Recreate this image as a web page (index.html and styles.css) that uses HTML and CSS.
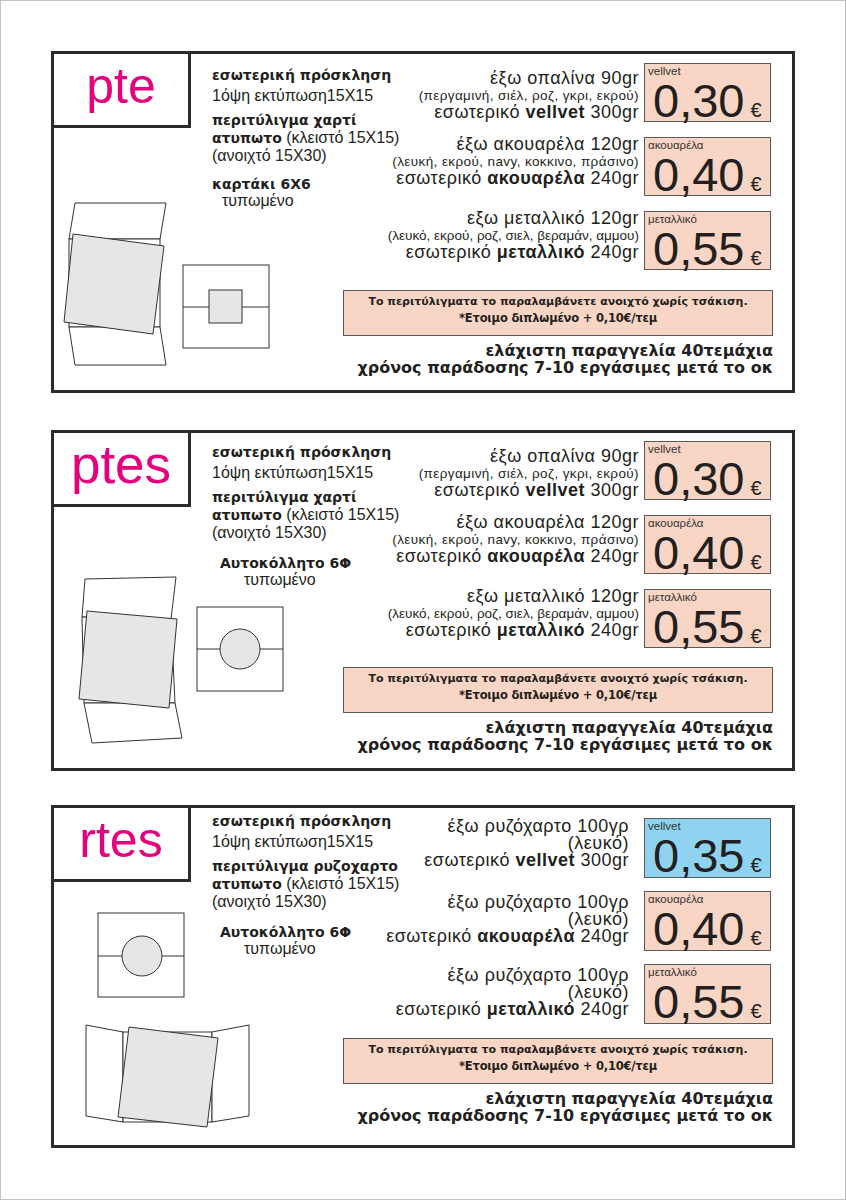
FILE: index.html
```html
<!DOCTYPE html>
<html lang="el">
<head>
<meta charset="utf-8">
<title>Προσκλήσεις pte / ptes / rtes</title>
<link rel="stylesheet" href="styles.css">
</head>
<body>
<div class="page">

  <section class="card card--a">
    <div class="left">
      <div class="logo">pte</div>
      <div class="spec">
        <div class="t1">εσωτερική πρόσκληση</div>
        <div class="t2">1όψη εκτύπωση15X15</div>
        <div class="t3">περιτύλιγμα χαρτί</div>
        <div class="t4"><b>ατυπωτο</b> (κλειστό 15Χ15)</div>
        <div class="t5">(ανοιχτό 15Χ30)</div>
        <div class="t6">καρτάκι 6Χ6</div>
        <div class="t7">τυπωμένο</div>
      </div>
      <svg class="draw" viewBox="54 128 289 262" width="289" height="262">
        <polygon class="fl" points="75,203 166,203 160,239 69,239"/>
        <rect class="fl" x="69" y="239" width="91" height="88"/>
        <polygon class="fl" points="69,327 160,327 166,365 75,365"/>
        <polygon class="gr" points="73,234 164,246 153,334 64,322"/>
        <rect class="fl" x="183" y="265" width="86" height="83"/>
        <line class="ln" x1="183" y1="307" x2="269" y2="307"/>
        <rect class="gr" x="209" y="290" width="33" height="33"/>
      </svg>
    </div>
    <div class="right">
      <div class="opts">
        <div class="opt">
          <div class="desc">
            <div class="d1">έξω οπαλίνα 90gr</div>
            <div class="d2 small">(περγαμινή, σιέλ, ροζ, γκρι, εκρού)</div>
            <div class="d3">εσωτερικό <b>vellvet</b> 300gr</div>
          </div>
          <div class="price"><div class="tag">vellvet</div><div class="amt">0,30<span class="eur">€</span></div></div>
        </div>
        <div class="opt">
          <div class="desc">
            <div class="d1">έξω ακουαρέλα 120gr</div>
            <div class="d2 small">(λευκή, εκρού, navy, κοκκινο, πράσινο)</div>
            <div class="d3">εσωτερικό <b>ακουαρέλα</b> 240gr</div>
          </div>
          <div class="price"><div class="tag">ακουαρέλα</div><div class="amt">0,40<span class="eur">€</span></div></div>
        </div>
        <div class="opt">
          <div class="desc">
            <div class="d1">εξω μεταλλικό 120gr</div>
            <div class="d2 small tight">(λευκό, εκρού, ροζ, σιελ, βεραμάν, αμμου)</div>
            <div class="d3">εσωτερικό <b>μεταλλικό</b> 240gr</div>
          </div>
          <div class="price"><div class="tag">μεταλλικό</div><div class="amt">0,55<span class="eur">€</span></div></div>
        </div>
      </div>
      <div class="note">
        <div class="n1">Το περιτύλιγματα το παραλαμβάνετε ανοιχτό χωρίς τσάκιση.</div>
        <div class="n2">*Ετοιμο διπλωμένο + 0,10€/τεμ</div>
      </div>
      <div class="foot">
        <div>ελάχιστη παραγγελία 40τεμάχια</div>
        <div>χρόνος παράδοσης 7-10 εργάσιμες μετά το οκ</div>
      </div>
    </div>
  </section>

  <section class="card card--b">
    <div class="left">
      <div class="logo">ptes</div>
      <div class="spec">
        <div class="t1">εσωτερική πρόσκληση</div>
        <div class="t2">1όψη εκτύπωση15X15</div>
        <div class="t3">περιτύλιγμα χαρτί</div>
        <div class="t4"><b>ατυπωτο</b> (κλειστό 15Χ15)</div>
        <div class="t5">(ανοιχτό 15Χ30)</div>
        <div class="t6">Αυτοκόλλητο 6Φ</div>
        <div class="t7">τυπωμένο</div>
      </div>
      <svg class="draw" viewBox="54 507 289 261" width="289" height="261">
        <polygon class="fl" points="85,579 176,577 171,619 82,617"/>
        <polygon class="fl" points="82,617 171,619 175,703 84,703"/>
        <polygon class="fl" points="84,703 175,703 182,738 92,743"/>
        <polygon class="gr" points="87,611 177,619 169,708 79,699"/>
        <rect class="fl" x="197" y="607" width="86" height="84"/>
        <line class="ln" x1="197" y1="649" x2="283" y2="649"/>
        <circle class="gr" cx="240" cy="649" r="20"/>
      </svg>
    </div>
    <div class="right">
      <div class="opts">
        <div class="opt">
          <div class="desc">
            <div class="d1">έξω οπαλίνα 90gr</div>
            <div class="d2 small">(περγαμινή, σιέλ, ροζ, γκρι, εκρού)</div>
            <div class="d3">εσωτερικό <b>vellvet</b> 300gr</div>
          </div>
          <div class="price"><div class="tag">vellvet</div><div class="amt">0,30<span class="eur">€</span></div></div>
        </div>
        <div class="opt">
          <div class="desc">
            <div class="d1">έξω ακουαρέλα 120gr</div>
            <div class="d2 small">(λευκή, εκρού, navy, κοκκινο, πράσινο)</div>
            <div class="d3">εσωτερικό <b>ακουαρέλα</b> 240gr</div>
          </div>
          <div class="price"><div class="tag">ακουαρέλα</div><div class="amt">0,40<span class="eur">€</span></div></div>
        </div>
        <div class="opt">
          <div class="desc">
            <div class="d1">εξω μεταλλικό 120gr</div>
            <div class="d2 small tight">(λευκό, εκρού, ροζ, σιελ, βεραμάν, αμμου)</div>
            <div class="d3">εσωτερικό <b>μεταλλικό</b> 240gr</div>
          </div>
          <div class="price"><div class="tag">μεταλλικό</div><div class="amt">0,55<span class="eur">€</span></div></div>
        </div>
      </div>
      <div class="note">
        <div class="n1">Το περιτύλιγματα το παραλαμβάνετε ανοιχτό χωρίς τσάκιση.</div>
        <div class="n2">*Ετοιμο διπλωμένο + 0,10€/τεμ</div>
      </div>
      <div class="foot">
        <div>ελάχιστη παραγγελία 40τεμάχια</div>
        <div>χρόνος παράδοσης 7-10 εργάσιμες μετά το οκ</div>
      </div>
    </div>
  </section>

  <section class="card card--c">
    <div class="left">
      <div class="logo">rtes</div>
      <div class="spec">
        <div class="t1">εσωτερική πρόσκληση</div>
        <div class="t2">1όψη εκτύπωση15X15</div>
        <div class="t3">περιτύλιγμα ρυζοχαρτο</div>
        <div class="t4"><b>ατυπωτο</b> (κλειστό 15Χ15)</div>
        <div class="t5">(ανοιχτό 15Χ30)</div>
        <div class="t6">Αυτοκόλλητο 6Φ</div>
        <div class="t7">τυπωμένο</div>
      </div>
      <svg class="draw" viewBox="54 882 289 263" width="289" height="263">
        <rect class="fl" x="98" y="913" width="86" height="84"/>
        <line class="ln" x1="98" y1="956" x2="184" y2="956"/>
        <circle class="gr" cx="142" cy="956" r="20"/>
        <polygon class="fl" points="86,1025 123,1032 123,1122 86,1116"/>
        <rect class="fl" x="123" y="1032" width="89" height="90"/>
        <polygon class="fl" points="212,1032 249,1025 249,1116 212,1122"/>
        <polygon class="gr" points="129,1027 218,1038 207,1127 118,1117"/>
      </svg>
    </div>
    <div class="right">
      <div class="opts">
        <div class="opt">
          <div class="desc">
            <div class="d1">έξω ρυζόχαρτο 100γρ</div>
            <div class="d2">(λευκό)</div>
            <div class="d3">εσωτερικό <b>vellvet</b> 300gr</div>
          </div>
          <div class="price price--blue"><div class="tag">vellvet</div><div class="amt">0,35<span class="eur">€</span></div></div>
        </div>
        <div class="opt">
          <div class="desc">
            <div class="d1">έξω ρυζόχαρτο 100γρ</div>
            <div class="d2">(λευκό)</div>
            <div class="d3">εσωτερικό <b>ακουαρέλα</b> 240gr</div>
          </div>
          <div class="price"><div class="tag">ακουαρέλα</div><div class="amt">0,40<span class="eur">€</span></div></div>
        </div>
        <div class="opt">
          <div class="desc">
            <div class="d1">έξω ρυζόχαρτο 100γρ</div>
            <div class="d2">(λευκό)</div>
            <div class="d3">εσωτερικό <b>μεταλλικό</b> 240gr</div>
          </div>
          <div class="price"><div class="tag">μεταλλικό</div><div class="amt">0,55<span class="eur">€</span></div></div>
        </div>
      </div>
      <div class="note">
        <div class="n1">Το περιτύλιγματα το παραλαμβάνετε ανοιχτό χωρίς τσάκιση.</div>
        <div class="n2">*Ετοιμο διπλωμένο + 0,10€/τεμ</div>
      </div>
      <div class="foot">
        <div>ελάχιστη παραγγελία 40τεμάχια</div>
        <div>χρόνος παράδοσης 7-10 εργάσιμες μετά το οκ</div>
      </div>
    </div>
  </section>

</div>
</body>
</html>
```

FILE: styles.css
```css
html, body {
  margin: 0;
  padding: 0;
  background: #ffffff;
}

body {
  font-family: "Liberation Sans", Arial, sans-serif;
  color: #231f20;
}

.page {
  width: 846px;
  height: 1200px;
  box-sizing: border-box;
  border: 1px solid #c4c4c4;
  padding: 50px 0 0 50px;
}

/* ---------- card ---------- */
.card {
  display: flex;
  width: 744px;
  height: 342px;
  box-sizing: border-box;
  border: 3px solid #2b2b2b;
}

.card--b {
  height: 341px;
  margin-top: 37px;
}

.card--c {
  height: 343px;
  margin-top: 34px;
}

/* ---------- left column ---------- */
.left {
  width: 289px;
  flex: none;
  display: grid;
  grid-template-columns: 137px 152px;
  grid-template-rows: 74px 1fr;
}

.logo {
  grid-column: 1;
  grid-row: 1;
  border-right: 3px solid #2b2b2b;
  border-bottom: 3px solid #2b2b2b;
  color: #e5007e;
  font-family: "Liberation Sans", Arial, sans-serif;
  font-size: 50px;
  line-height: 64px;
  text-align: center;
}

.card--b .logo { font-size: 53px; }

.spec {
  grid-column: 2;
  grid-row: 1 / 3;
  padding: 13px 0 0 21px;
  white-space: nowrap;
  font-size: 16px;
  line-height: 17px;
}

.card--b .spec { padding-top: 11px; }
.card--c .spec { padding-top: 5px; }

.spec .t1,
.spec .t3,
.spec .t6,
.spec b {
  font-family: "DejaVu Sans", Verdana, sans-serif;
  font-weight: bold;
  font-size: 14px;
}

.spec .t2 { margin-top: 3px; }
.spec .t3 { margin-top: 8px; }
.spec .t6 { margin-top: 12px; }
.spec .t7 { line-height: 16px; padding-left: 10px; }

.card--b .t6,
.card--c .t6 { margin-top: 14px; padding-left: 8px; }
.card--b .t7,
.card--c .t7 { padding-left: 32px; }

.draw {
  grid-column: 1 / 3;
  grid-row: 2;
  display: block;
}

.fl { fill: #ffffff; stroke: #333333; stroke-width: 1; }
.gr { fill: #e6e6e6; stroke: #333333; stroke-width: 1; }
.ln { stroke: #333333; stroke-width: 1; }

/* ---------- right column ---------- */
.right {
  flex: 1;
  padding: 9px 19px 0 0;
  display: flex;
  flex-direction: column;
}

.card--b .right { padding-top: 8px; }
.card--c .right { padding-top: 10px; }

.opts {
  display: flex;
  flex-direction: column;
  gap: 15px;
}

.card--c .opts { gap: 13px; }

.opt {
  display: flex;
  justify-content: flex-end;
  align-items: flex-start;
  gap: 5px;
  margin-right: 2px;
}

.card--c .opt { gap: 15px; }

.desc {
  text-align: right;
  white-space: nowrap;
  font-size: 18px;
  letter-spacing: 0.5px;
  line-height: 17px;
  margin-top: -1px;
}

.opt:first-child .desc { margin-top: 7px; }

.card--c .desc { margin-top: 3px; }
.card--c .opt:first-child .desc { margin-top: 0; }

.desc .small {
  font-size: 13.5px;
  letter-spacing: 0.4px;
}

.desc .small.tight { letter-spacing: 0; }

.price {
  width: 127px;
  height: 59px;
  flex: none;
  box-sizing: border-box;
  border: 1px solid #5a5a5a;
  background: #f8d5c4;
  padding: 1px 0 0 3px;
}

.card--c .price { height: 60px; }

.price--blue { background: #8fd3f1; }

.tag {
  font-size: 11.5px;
  line-height: 12px;
  color: #333333;
}

.amt {
  font-size: 47px;
  line-height: 47px;
  padding-left: 5px;
  white-space: nowrap;
}

.eur {
  font-size: 20px;
  margin-left: 6px;
}

.note {
  margin-top: 20px;
  height: 46px;
  box-sizing: border-box;
  border: 1px solid #5a5a5a;
  background: #f8d5c4;
  padding-top: 4px;
  text-align: center;
  font-family: "DejaVu Sans", Verdana, sans-serif;
  font-weight: bold;
  white-space: nowrap;
}

.card--b .note { margin-top: 19px; }
.card--c .note { margin-top: 14px; }

.n1 { font-size: 11px; line-height: 14px; }
.n2 { font-size: 11.5px; letter-spacing: -0.2px; line-height: 19px; }

.foot {
  margin-top: 6px;
  text-align: right;
  font-family: "DejaVu Sans", Verdana, sans-serif;
  font-weight: bold;
  font-size: 16px;
  line-height: 17px;
  white-space: nowrap;
}
```
